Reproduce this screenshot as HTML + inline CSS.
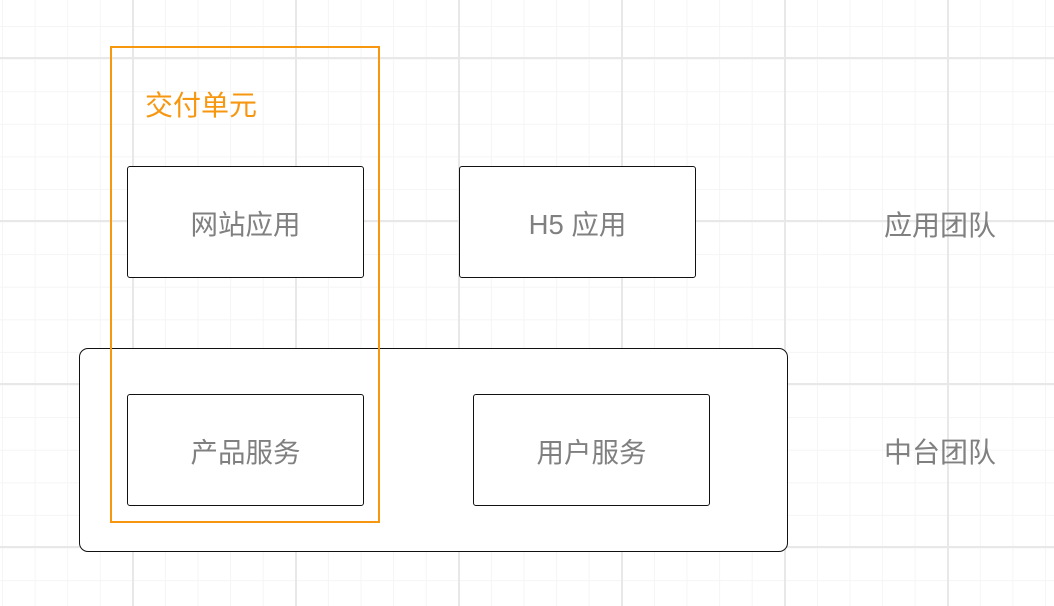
<!DOCTYPE html>
<html><head><meta charset="utf-8"><style>
html,body{margin:0;padding:0}
body{width:1054px;height:606px;position:relative;overflow:hidden;background:#fff;
font-family:"Liberation Sans","Noto Sans CJK SC",sans-serif;
background-image:
linear-gradient(90deg,#e8e8e8 2px,transparent 2px),
linear-gradient(0deg,#e8e8e8 2px,transparent 2px),
linear-gradient(90deg,#f5f5f5 1px,transparent 1px),
linear-gradient(0deg,#f5f5f5 1px,transparent 1px);
background-size:163px 163px,163px 163px,32.6px 32.6px,32.6px 32.6px;
background-position:132px 0,0 59px,2px 0,0 27px;}
.b{position:absolute;background:#fff;border:1px solid #111;border-radius:3px;box-sizing:border-box;display:flex;align-items:center;justify-content:center;font-size:27.5px;color:#808080}
.t{position:absolute;font-size:28px;color:#808080}
</style></head><body>
<div style="position:absolute;left:79px;top:348px;width:709px;height:204px;border:1px solid #111;border-radius:9px;box-sizing:border-box;background:#fff"></div>
<div class="b" style="left:127px;top:166px;width:237px;height:112px">网站应用</div>
<div class="b" style="left:459px;top:166px;width:237px;height:112px">H5 应用</div>
<div class="b" style="left:127px;top:394px;width:237px;height:112px">产品服务</div>
<div class="b" style="left:473px;top:394px;width:237px;height:112px">用户服务</div>
<div style="position:absolute;left:110px;top:46px;width:270px;height:477px;border:2px solid #f7960f;box-sizing:border-box"></div>
<div class="t" style="left:145px;top:84px;color:#f7960f">交付单元</div>
<div class="t" style="left:884px;top:204px">应用团队</div>
<div class="t" style="left:884px;top:431px">中台团队</div>
</body></html>
